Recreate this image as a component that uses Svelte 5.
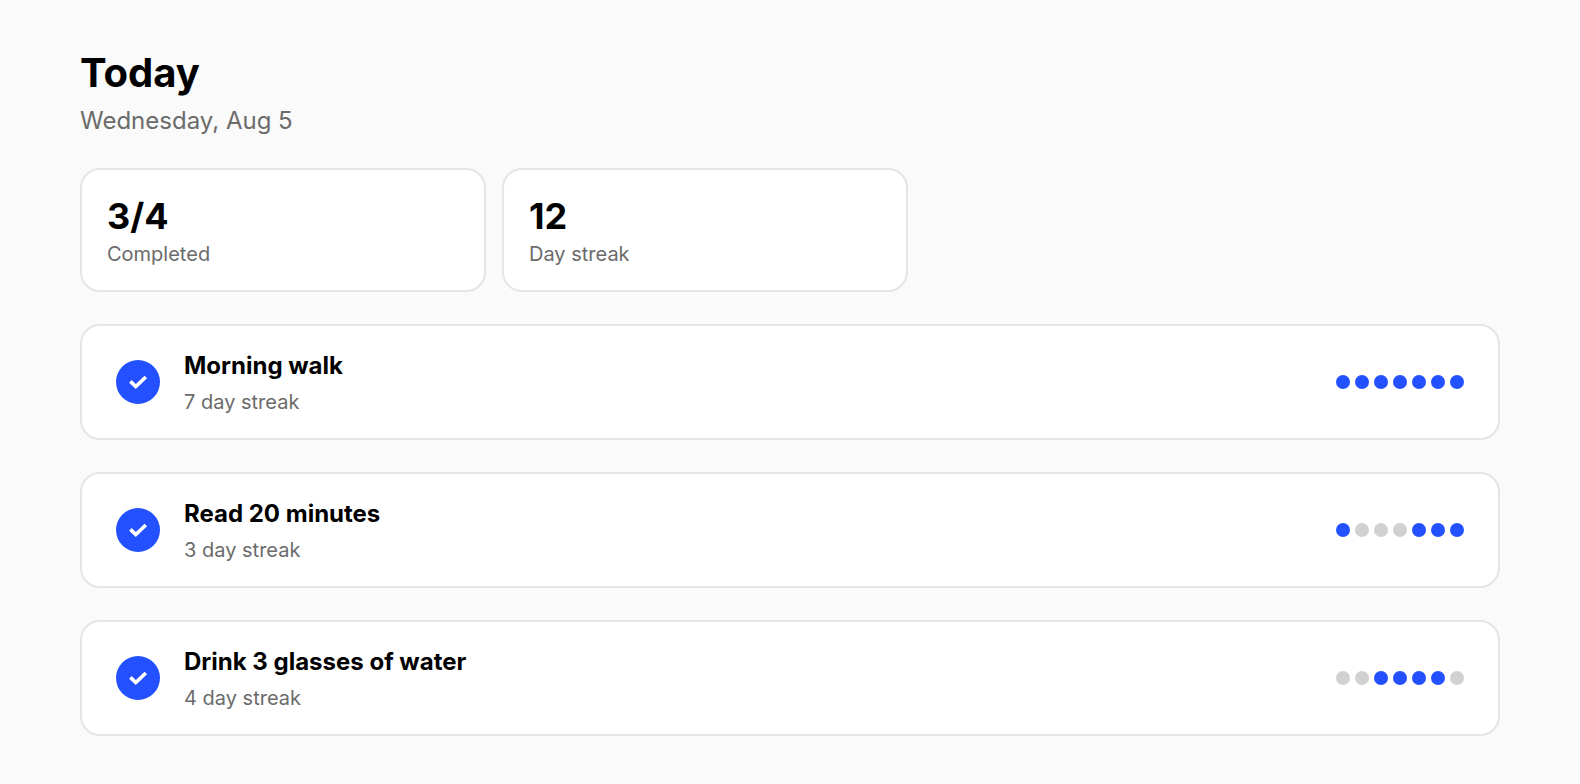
<script lang="ts">
	type Habit = { id: string; name: string; streak: number; done: boolean; week: boolean[] };

	const stats = [
		{ label: 'Completed', value: '3/4' },
		{ label: 'Day streak', value: '12' }
	];

	const days = (pattern: string) => Array.from(pattern, (c) => c === 'x');

	let habits = $state<Habit[]>([
		{ id: 'walk', name: 'Morning walk', streak: 7, done: true, week: days('xxxxxxx') },
		{ id: 'read', name: 'Read 20 minutes', streak: 3, done: true, week: days('x---xxx') },
		{ id: 'water', name: 'Drink 3 glasses of water', streak: 4, done: true, week: days('--xxxx-') }
	]);
</script>

<main class="page">
	<header class="header">
		<h1>Today</h1>
		<p>Wednesday, Aug 5</p>
	</header>

	<section class="stats">
		{#each stats as stat (stat.label)}
			<div class="card stat">
				<span class="stat-value">{stat.value}</span>
				<span class="muted">{stat.label}</span>
			</div>
		{/each}
	</section>

	<ul class="habits">
		{#each habits as habit (habit.id)}
			<li class="card habit">
				<span class="check">
					<input id={habit.id} type="checkbox" bind:checked={habit.done} />
					<svg viewBox="0 0 44 44" fill="none" stroke="#fff" stroke-width="3.6">
						<path d="M14.4 21.4l5.4 5.2L29.8 17" />
					</svg>
				</span>
				<div class="habit-text">
					<label class="habit-name" for={habit.id}>{habit.name}</label>
					<span class="muted">{habit.streak} day streak</span>
				</div>
				<div class="week">
					{#each habit.week as done}
						<span class="dot" class:done></span>
					{/each}
				</div>
			</li>
		{/each}
	</ul>
</main>

<style>
	:global(body) {
		margin: 0;
		background: #fafafa;
	}

	.page {
		display: flex;
		flex-direction: column;
		gap: 32px;
		padding: 48px 80px;
		font-family: Inter, sans-serif;
		color: #000;
	}

	.header h1 {
		margin: 0;
		font-size: 40px;
		font-weight: 700;
		line-height: 50px;
	}

	.header p {
		margin: 8px 0 0;
		font-size: 24px;
		line-height: 30px;
		color: #6b6b6b;
	}

	.card {
		box-sizing: border-box;
		background: #fff;
		border: 2px solid #e5e5e5;
		border-radius: 20px;
	}

	.stats {
		display: grid;
		grid-template-columns: 1fr 1fr;
		gap: 16px;
		max-width: 828px;
	}

	.stat {
		display: flex;
		flex-direction: column;
		gap: 2px;
		padding: 24px 25px 22px;
	}

	.stat-value {
		font-size: 36px;
		font-weight: 700;
		line-height: 44px;
	}

	.muted {
		font-size: 20px;
		line-height: 28px;
		color: #6b6b6b;
	}

	.habits {
		display: flex;
		flex-direction: column;
		gap: 32px;
		margin: 0;
		padding: 0;
		list-style: none;
	}

	.habit {
		display: flex;
		align-items: center;
		gap: 24px;
		padding: 22px 34px;
	}

	.check {
		position: relative;
		width: 44px;
		height: 44px;
	}

	.check input {
		appearance: none;
		display: block;
		width: 44px;
		height: 44px;
		margin: 0;
		border: 2px solid #d1d1d1;
		border-radius: 50%;
		cursor: pointer;
	}

	.check input:checked {
		border: none;
		background: #2451ff;
	}

	.check svg {
		position: absolute;
		inset: 0;
		pointer-events: none;
	}

	.habit-text {
		display: flex;
		flex: 1;
		flex-direction: column;
		gap: 6px;
		padding-top: 2px;
	}

	.habit-name {
		font-size: 24px;
		font-weight: 700;
		line-height: 32px;
	}

	.week {
		display: flex;
		gap: 5px;
	}

	.dot {
		width: 14px;
		height: 14px;
		border-radius: 50%;
		background: #d1d1d1;
	}

	.dot.done {
		background: #2451ff;
	}
</style>
